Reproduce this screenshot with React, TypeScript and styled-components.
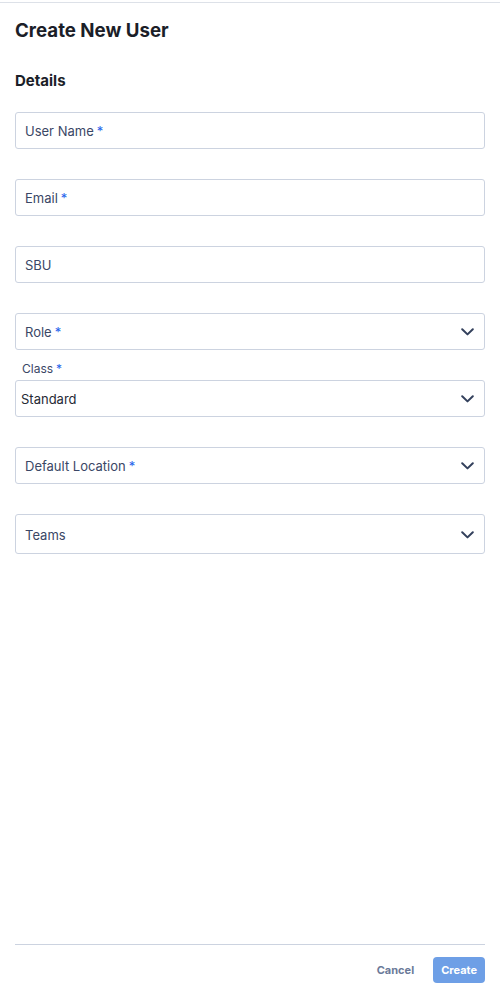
import React from "react";
import styled, { createGlobalStyle } from "styled-components";

const GlobalStyle = createGlobalStyle`
  html, body {
    margin: 0;
    padding: 0;
    background: #ffffff;
    font-family: Inter, "Noto Sans", "Liberation Sans", sans-serif;
  }
`;

const Panel = styled.div`
  box-sizing: border-box;
  height: 998px;
  padding-top: 2px;
  display: flex;
  flex-direction: column;
`;

const Body = styled.div`
  flex: 1;
  border-top: 1px solid #dde1e8;
  padding: 16px 15px 0;
  display: flex;
  flex-direction: column;
`;

const Title = styled.h1`
  margin: 0;
  font-size: 18.7px;
  line-height: 24px;
  font-weight: 700;
  color: #1b1e28;
`;

const SectionTitle = styled.h2`
  margin: 28px 0 21px;
  font-size: 15px;
  line-height: 20px;
  font-weight: 700;
  color: #1b1e28;
`;

const Field = styled.div<{ $gap?: number }>`
  margin-top: ${(p) => p.$gap ?? 30}px;
  &:first-of-type {
    margin-top: 0;
  }
`;

const OuterLabel = styled.label`
  display: block;
  padding: 11px 0 3px 7px;
  font-size: 12px;
  line-height: 16px;
  color: #3a4766;
`;

const Box = styled.div<{ $tall?: boolean; $filled?: boolean }>`
  box-sizing: border-box;
  height: ${(p) => (p.$tall ? 40 : 37)}px;
  border: 1px solid #ccd3e0;
  border-radius: 3px;
  display: flex;
  align-items: center;
  justify-content: space-between;
  padding: 0 10px 0 ${(p) => (p.$filled ? 5 : 9)}px;
  padding-top: ${(p) => (p.$tall ? 2 : 0)}px;
  font-size: 13px;
  color: ${(p) => (p.$filled ? "#262a35" : "#3a4766")};
`;

const Required = styled.span`
  color: #2563eb;
  margin-left: 3px;
`;

const Chevron = styled.svg`
  width: 13px;
  height: 8px;
  flex-shrink: 0;
`;

const Footer = styled.div`
  margin: 0 15px;
  border-top: 1px solid #ccd3e0;
  padding: 12px 0 15px;
  display: flex;
  justify-content: flex-end;
  align-items: center;
`;

const Button = styled.button<{ $primary?: boolean }>`
  height: 26px;
  border: none;
  border-radius: 4px;
  font-family: inherit;
  font-size: 11px;
  font-weight: 700;
  padding: 0 ${(p) => (p.$primary ? 8 : 9)}px;
  background: ${(p) => (p.$primary ? "#6e9fe6" : "transparent")};
  color: ${(p) => (p.$primary ? "#ffffff" : "#6b7a99")};
  margin-left: ${(p) => (p.$primary ? 10 : 0)}px;
  cursor: pointer;
`;

const Down = () => (
  <Chevron viewBox="0 0 13 8" fill="none">
    <path d="M1.2 1.2 6.5 6.4 11.8 1.2" stroke="#33405c" strokeWidth="2" strokeLinecap="round" strokeLinejoin="round" />
  </Chevron>
);

const App: React.FC = () => {
  return (
    <Panel>
      <GlobalStyle />
      <Body>
        <Title>Create New User</Title>
        <SectionTitle>Details</SectionTitle>
        <Field>
          <Box>
            <span>User Name<Required>*</Required></span>
          </Box>
        </Field>
        <Field>
          <Box>
            <span>Email<Required>*</Required></span>
          </Box>
        </Field>
        <Field>
          <Box>
            <span>SBU</span>
          </Box>
        </Field>
        <Field>
          <Box>
            <span>Role<Required>*</Required></span>
            <Down />
          </Box>
        </Field>
        <Field $gap={0}>
          <OuterLabel>Class<Required>*</Required></OuterLabel>
          <Box $filled>
            <span>Standard</span>
            <Down />
          </Box>
        </Field>
        <Field>
          <Box>
            <span>Default Location<Required>*</Required></span>
            <Down />
          </Box>
        </Field>
        <Field>
          <Box $tall>
            <span>Teams</span>
            <Down />
          </Box>
        </Field>
      </Body>
      <Footer>
        <Button>Cancel</Button>
        <Button $primary>Create</Button>
      </Footer>
    </Panel>
  );
};

export default App;
